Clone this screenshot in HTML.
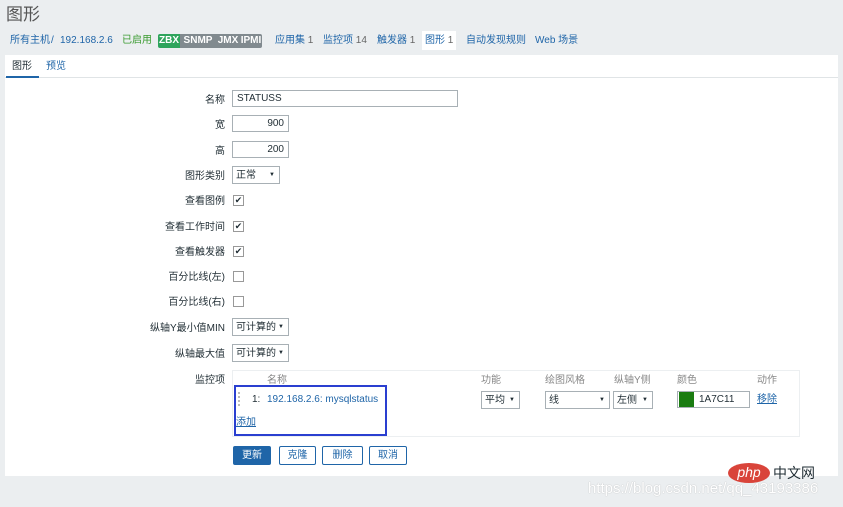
<!DOCTYPE html><html><head><meta charset="utf-8"><style>
body{margin:0;width:843px;height:507px;background:#ebeef0;font-family:"Liberation Sans","Noto Sans CJK SC",sans-serif;font-size:10px;color:#1f2c33;position:relative;overflow:hidden}
.a{position:absolute;white-space:nowrap;line-height:16px}
.lnk{color:#1f65a8}
.lbl{position:absolute;right:618px;text-align:right;line-height:18px;margin-top:2px}
.in{position:absolute;left:232px;height:17px;border:1px solid #a8b0b5;background:#fff;box-sizing:border-box;padding:0 4px;font-size:10px;line-height:16px}
.sel{position:absolute;height:18px;border:1px solid #a8b0b5;background:#fff;box-sizing:border-box;padding:0 3px;font-size:10px;line-height:17px}
.sel:after{content:"▼";position:absolute;right:4px;top:0;font-size:6px}
.cb{position:absolute;left:233px;width:9px;height:9px;border:1px solid #999;background:#fff;font-size:9px;line-height:9px;text-align:center}
.btn{position:absolute;top:446px;height:19px;border:1px solid #1f65a8;background:#fff;color:#1f65a8;box-sizing:border-box;text-align:center;line-height:17px;border-radius:2px}
.bd{position:absolute;top:34px;height:14px;color:#fff;font-weight:bold;font-size:10px;line-height:14px;text-align:center;background:#818a8f;overflow:hidden}
</style></head><body>
<div class="a" style="left:6px;top:5px;font-size:17px;line-height:20px;color:#555">图形</div>
<div class="a lnk" style="left:10px;top:33px">所有主机</div>
<div class="a lnk" style="left:51px;top:33px">/</div>
<div class="a lnk" style="left:60px;top:33px">192.168.2.6</div>
<div class="a" style="left:122px;top:33px;color:#3a9b2f">已启用</div>
<div class="bd" style="left:158px;width:22px;background:#2ea45c;border-radius:2px 0 0 2px">ZBX</div>
<div class="bd" style="left:180px;width:36px">SNMP</div>
<div class="bd" style="left:216px;width:24px">JMX</div>
<div class="bd" style="left:240px;width:22px;border-radius:0 2px 2px 0">IPMI</div>
<div class="a lnk" style="left:275px;top:33px">应用集 <span style="color:#666">1</span></div>
<div class="a lnk" style="left:323px;top:33px">监控项 <span style="color:#666">14</span></div>
<div class="a lnk" style="left:377px;top:33px">触发器 <span style="color:#666">1</span></div>
<div class="a" style="left:422px;top:31px;width:34px;height:19px;background:#fff"></div>
<div class="a lnk" style="left:425px;top:33px">图形 <span style="color:#666">1</span></div>
<div class="a lnk" style="left:466px;top:33px">自动发现规则</div>
<div class="a lnk" style="left:535px;top:33px">Web 场景</div>
<div class="a" style="left:5px;top:55px;width:833px;height:421px;background:#fff"></div>
<div class="a" style="left:5px;top:77px;width:833px;height:1px;background:#e0e4e6"></div>
<div class="a" style="left:12px;top:59px">图形</div>
<div class="a" style="left:6px;top:76px;width:33px;height:2px;background:#1f65a8"></div>
<div class="a lnk" style="left:46px;top:59px">预览</div>

<div class="lbl" style="top:90px">名称</div><div class="in" style="top:90px;width:226px">STATUSS</div>
<div class="lbl" style="top:115px">宽</div><div class="in" style="top:115px;width:57px;text-align:right">900</div>
<div class="lbl" style="top:141px">高</div><div class="in" style="top:141px;width:57px;text-align:right">200</div>
<div class="lbl" style="top:166px">图形类别</div><div class="sel" style="left:232px;top:166px;width:48px">正常</div>
<div class="lbl" style="top:191px">查看图例</div><div class="cb" style="top:195px">✔</div>
<div class="lbl" style="top:217px">查看工作时间</div><div class="cb" style="top:221px">✔</div>
<div class="lbl" style="top:242px">查看触发器</div><div class="cb" style="top:246px">✔</div>
<div class="lbl" style="top:267px">百分比线(左)</div><div class="cb" style="top:271px"></div>
<div class="lbl" style="top:292px">百分比线(右)</div><div class="cb" style="top:296px"></div>
<div class="lbl" style="top:318px">纵轴Y最小值MIN</div><div class="sel" style="left:232px;top:318px;width:57px">可计算的</div>
<div class="lbl" style="top:344px">纵轴最大值</div><div class="sel" style="left:232px;top:344px;width:57px">可计算的</div>
<div class="lbl" style="top:370px">监控项</div>
<div class="a" style="left:232px;top:370px;width:566px;height:65px;border:1px solid #eceff1"></div>
<div class="a" style="left:267px;top:373px;color:#888">名称</div>
<div class="a" style="left:481px;top:373px;color:#888">功能</div>
<div class="a" style="left:545px;top:373px;color:#888">绘图风格</div>
<div class="a" style="left:614px;top:373px;color:#888">纵轴Y侧</div>
<div class="a" style="left:677px;top:373px;color:#888">颜色</div>
<div class="a" style="left:757px;top:373px;color:#888">动作</div>
<div class="a" style="left:234px;top:385px;width:149px;height:47px;border:2px solid #2a3fd0"></div>
<div class="a" style="left:238px;top:392px;width:2px;height:14px;border-left:2px dotted #bbb"></div>
<div class="a" style="left:252px;top:392px">1:</div>
<div class="a lnk" style="left:267px;top:392px">192.168.2.6: mysqlstatus</div>
<div class="a lnk" style="left:236px;top:415px;text-decoration:underline">添加</div>
<div class="sel" style="left:481px;top:391px;width:39px">平均</div>
<div class="sel" style="left:545px;top:391px;width:65px">线</div>
<div class="sel" style="left:613px;top:391px;width:40px">左侧</div>
<div class="a" style="left:677px;top:391px;width:73px;height:17px;border:1px solid #a8b0b5;box-sizing:border-box;background:#fff"></div>
<div class="a" style="left:679px;top:392px;width:15px;height:15px;background:#1a7c11"></div>
<div class="a" style="left:699px;top:392px">1A7C11</div>
<div class="a lnk" style="left:757px;top:392px;text-decoration:underline">移除</div>
<div class="btn" style="left:233px;width:38px;background:#1f65a8;color:#fff">更新</div>
<div class="btn" style="left:279px;width:37px">克隆</div>
<div class="btn" style="left:322px;width:41px">删除</div>
<div class="btn" style="left:369px;width:38px">取消</div>
<div class="a" style="left:728px;top:463px;width:42px;height:20px;border-radius:50%;background:#d9443a;color:#fff;font-style:italic;font-size:14px;text-align:center;line-height:19px">php</div>
<div class="a" style="left:773px;top:465px;font-size:14px;line-height:16px">中文网</div>
<div class="a" style="left:588px;top:480px;font-size:15px;line-height:17px;color:#fff;text-shadow:0 0 1px #aaa">https://blog.csdn.net/qq_43193386</div>
</body></html>
